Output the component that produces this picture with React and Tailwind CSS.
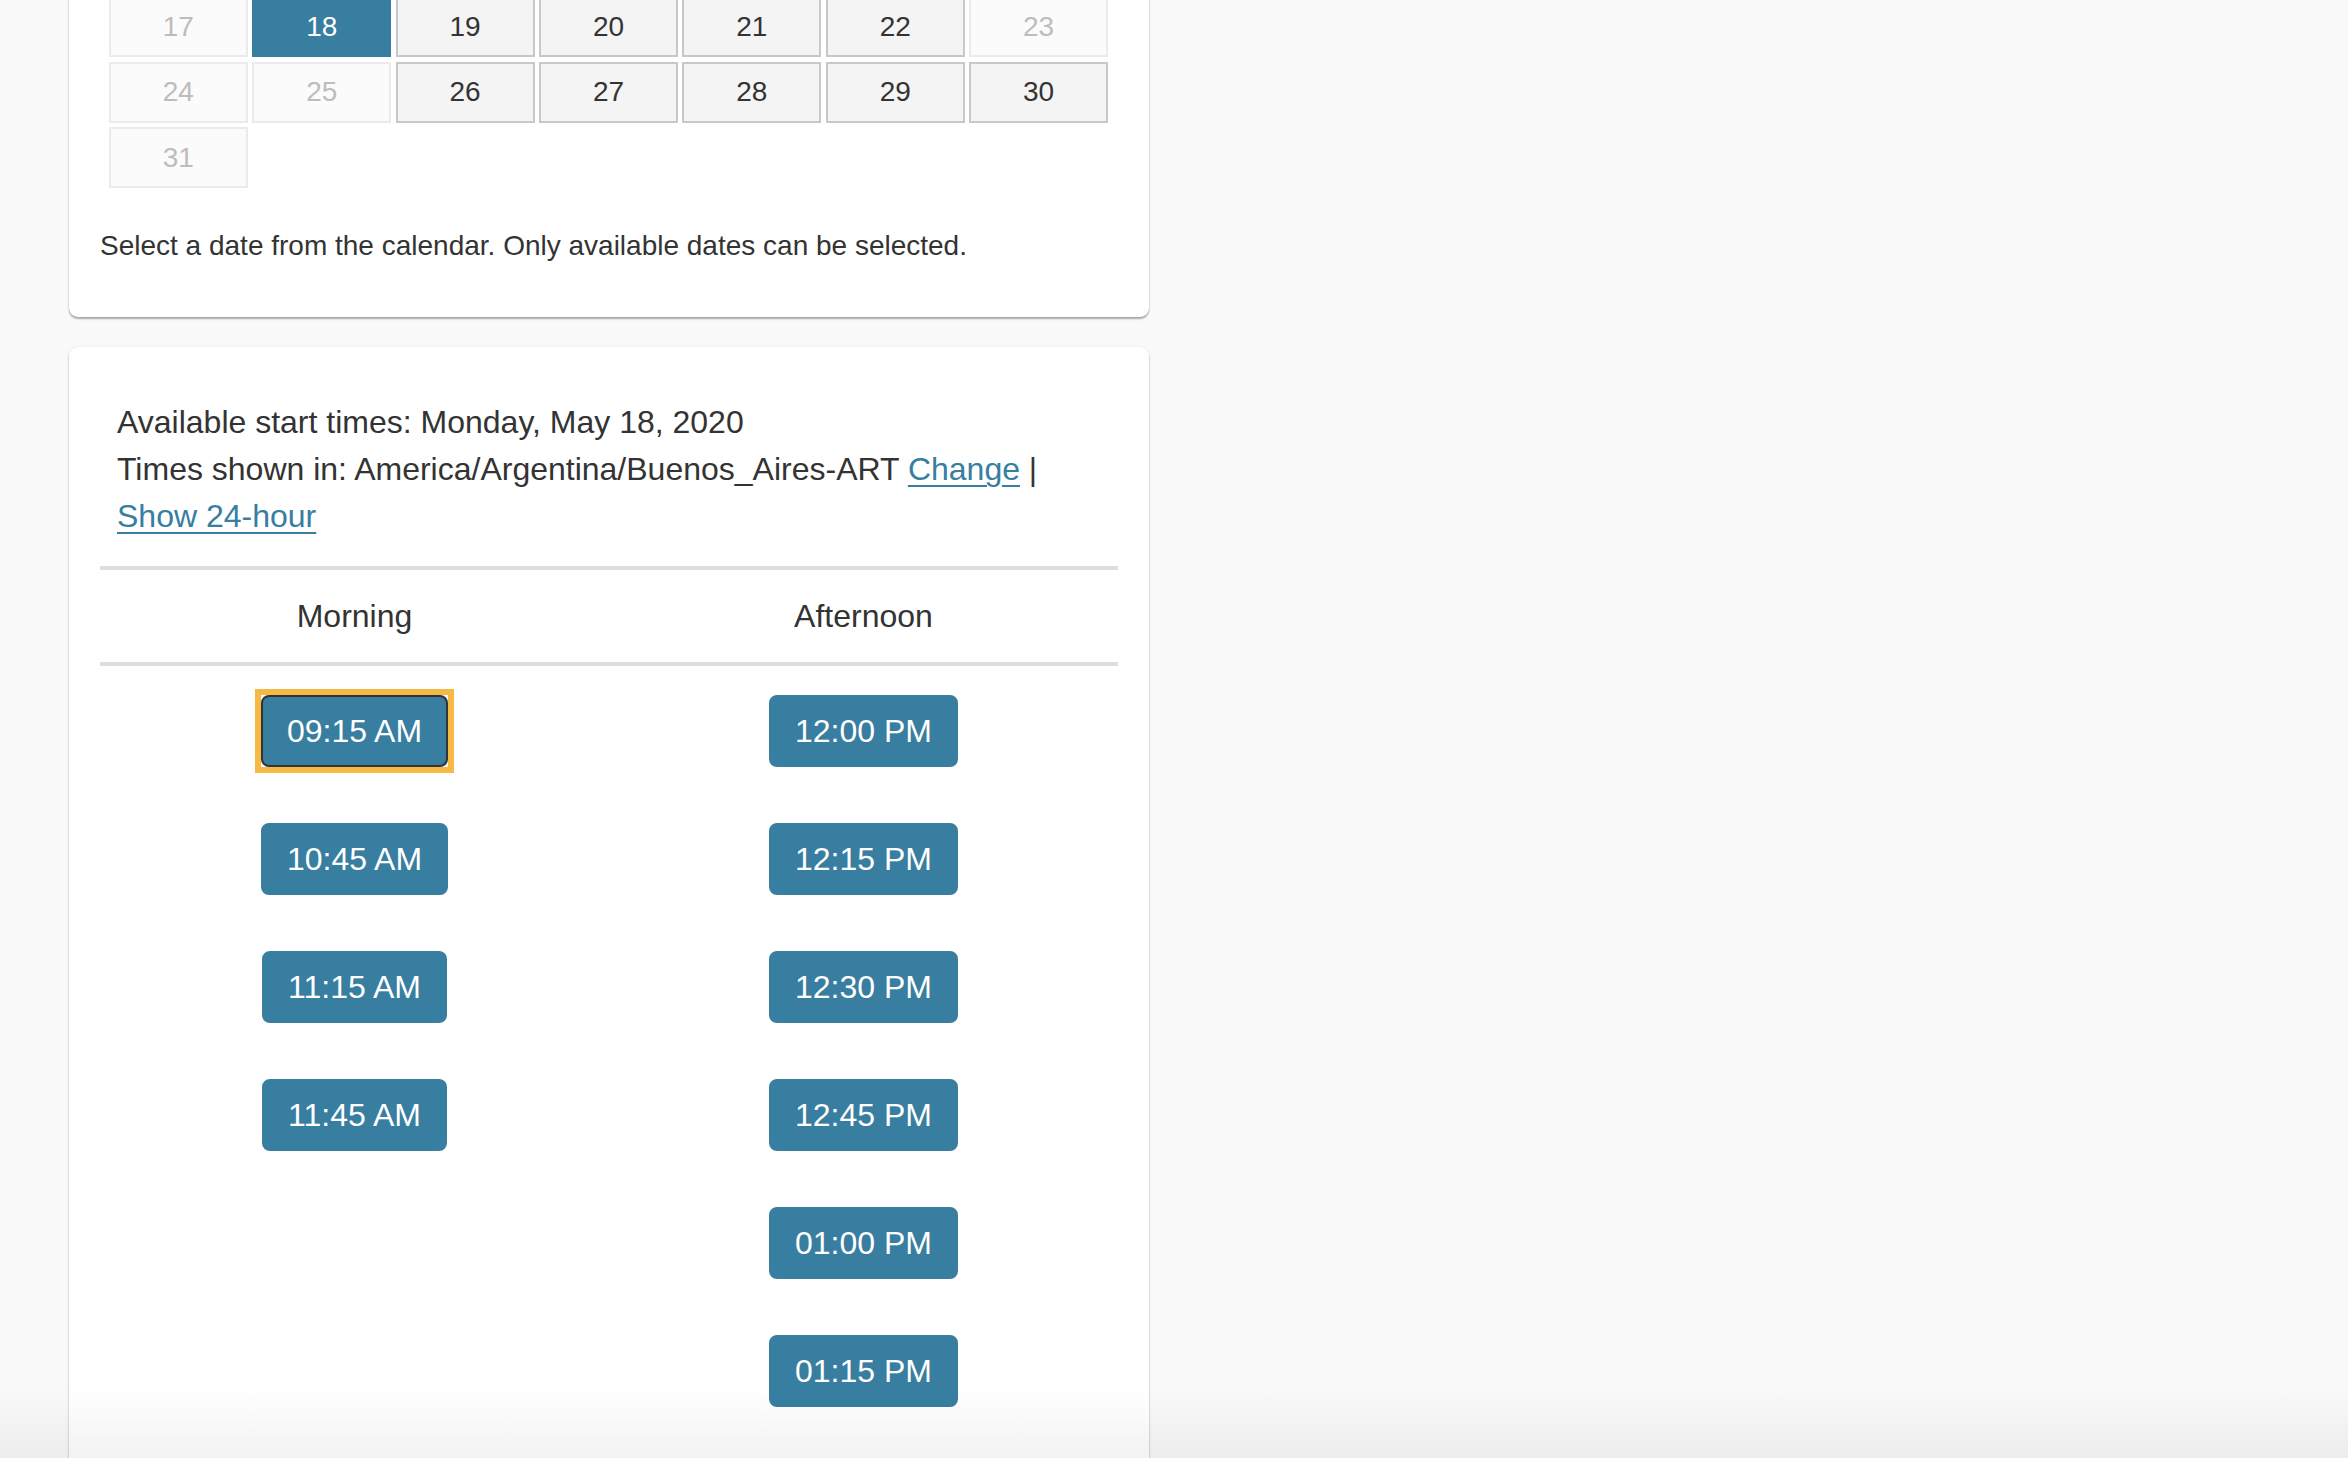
import React from 'react';

const rows = [
  [
    { d: 17, s: 'off' },
    { d: 18, s: 'sel' },
    { d: 19, s: 'on' },
    { d: 20, s: 'on' },
    { d: 21, s: 'on' },
    { d: 22, s: 'on' },
    { d: 23, s: 'off' },
  ],
  [
    { d: 24, s: 'off' },
    { d: 25, s: 'off' },
    { d: 26, s: 'on' },
    { d: 27, s: 'on' },
    { d: 28, s: 'on' },
    { d: 29, s: 'on' },
    { d: 30, s: 'on' },
  ],
  [{ d: 31, s: 'off' }],
];

const morning = ['09:15 AM', '10:45 AM', '11:15 AM', '11:45 AM'];
const afternoon = ['12:00 PM', '12:15 PM', '12:30 PM', '12:45 PM', '01:00 PM', '01:15 PM'];

function DayCell({ day }) {
  if (day.s === 'sel') {
    return (
      <div className="h-[61px] flex items-center justify-center bg-[#377ea0] text-white">{day.d}</div>
    );
  }
  if (day.s === 'on') {
    return (
      <div className="h-[61px] flex items-center justify-center bg-[#f4f4f4] border-2 border-[#c8c8c8] text-[#333]">
        {day.d}
      </div>
    );
  }
  return (
    <div className="h-[61px] flex items-center justify-center bg-[#fbfbfb] border-2 border-[#ebebeb] text-[#bdbdbd]">
      {day.d}
    </div>
  );
}

function TimeButton({ label, focused }) {
  const btn = (
    <button
      className={
        'h-[72px] px-[24px] rounded-[8px] bg-[#377ea0] text-white text-[32px] leading-none border-2 ' +
        (focused ? 'border-[#333]' : 'border-[#377ea0]')
      }
    >
      {label}
    </button>
  );
  return (
    <div className="h-[128px] flex justify-center items-start">
      {focused ? (
        // square focus ring around the rounded button
        <div className="-mt-[6px] border-[6px] border-[#f6b944] bg-white flex">{btn}</div>
      ) : (
        btn
      )}
    </div>
  );
}

export default function App() {
  return (
    <div
      className="relative h-[1458px] overflow-hidden bg-[#f9f9f9] text-[#333]"
      style={{ fontFamily: '"Liberation Sans", Arial, sans-serif' }}
    >
      <div className="ml-[69px] w-[1080px] -mt-[39px]">
        {/* date picker card */}
        <div className="bg-white rounded-[9px] shadow-[0_2px_2px_rgba(0,0,0,0.32),0_0_3px_rgba(0,0,0,0.08)] pt-[35px] pb-[52px] px-[31px]">
          <div className="ml-[9px] w-[999px] grid grid-cols-7 gap-x-[4.6px] gap-y-[4.6px] text-[28px]">
            {rows.flat().map((day) => (
              <DayCell key={day.d} day={day} />
            ))}
          </div>
          <p className="mt-[39px] text-[28px] leading-[38px]">
            Select a date from the calendar. Only available dates can be selected.
          </p>
        </div>

        {/* times card */}
        <div className="mt-[30px] bg-white rounded-[9px] shadow-[0_2px_2px_rgba(0,0,0,0.32),0_0_3px_rgba(0,0,0,0.08)] px-[31px] pt-[52px] pb-[40px]">
          <div className="px-[17px] text-[32px] leading-[47px]">
            <div>Available start times: Monday, May 18, 2020</div>
            <div>
              Times shown in: America/Argentina/Buenos_Aires-ART{' '}
              <a href="#" className="text-[#377ea0] underline decoration-2 underline-offset-[5px]">
                Change
              </a>{' '}
              |{' '}
              <a href="#" className="text-[#377ea0] underline decoration-2 underline-offset-[5px]">
                Show 24-hour
              </a>
            </div>
          </div>

          <div className="mt-[26px] border-t-4 border-b-4 border-[#dddddd] h-[100px] grid grid-cols-2 items-center text-[32px]">
            <div className="text-center">Morning</div>
            <div className="text-center">Afternoon</div>
          </div>

          <div className="mt-[29px] grid grid-cols-2">
            <div>
              {morning.map((t, i) => (
                <TimeButton key={t} label={t} focused={i === 0} />
              ))}
            </div>
            <div>
              {afternoon.map((t) => (
                <TimeButton key={t} label={t} />
              ))}
            </div>
          </div>
        </div>
      </div>

      <div className="absolute left-0 right-0 bottom-0 h-[70px] bg-linear-to-b from-transparent to-[rgba(0,0,0,0.05)] pointer-events-none" />
    </div>
  );
}
